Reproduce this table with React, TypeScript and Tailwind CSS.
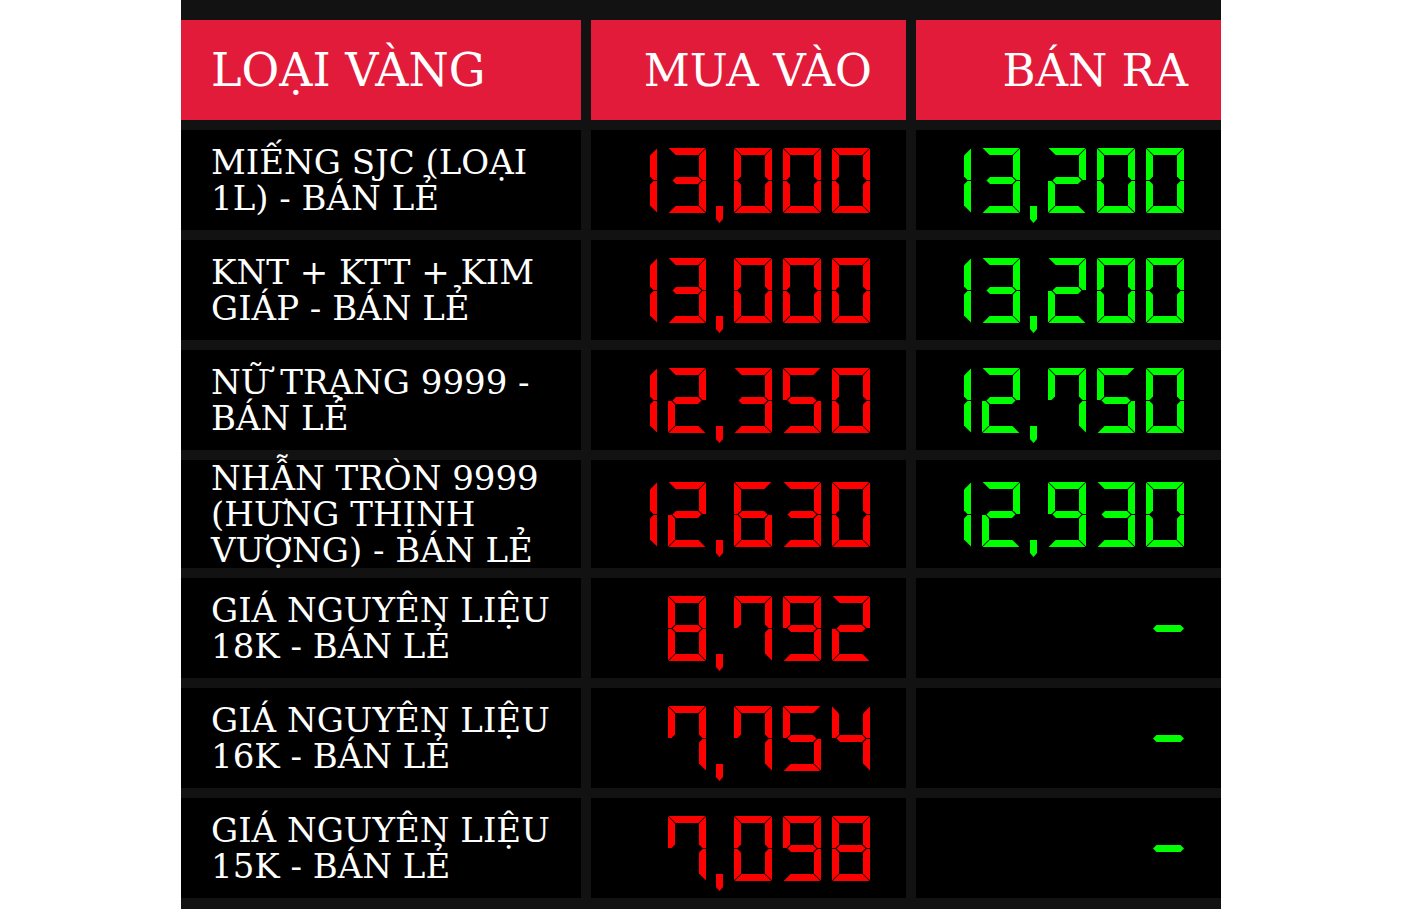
import React from "react";

// 7-segment cell: 38 x 65, segment thickness 7
const SEGMENTS: Record<string, string> = {
  a: "0.6,0 37.4,0 30.4,7 7.6,7",
  b: "38,0.6 38,32 34.5,32 31,28.5 31,7.6",
  c: "38,33 38,64.4 31,57.4 31,36.5 34.5,33",
  d: "7.6,58 30.4,58 37.4,65 0.6,65",
  e: "0,33 3.5,33 7,36.5 7,57.4 0,64.4",
  f: "0,0.6 7,7.6 7,28.5 3.5,32 0,32",
  g: "4.5,32.5 8,29 30,29 33.5,32.5 30,36 8,36",
};

const DIGITS: Record<string, string> = {
  "0": "abcdef",
  "1": "bc",
  "2": "abged",
  "3": "abgcd",
  "4": "fgbc",
  "5": "afgcd",
  "6": "afgedc",
  "7": "afbc",
  "8": "abcdefg",
  "9": "abcdfg",
};

function Digit({ ch, color }: { ch: string; color: string }) {
  const on = DIGITS[ch] ?? "";
  return (
    <svg width={38} height={65} viewBox="0 0 38 65" className="block shrink-0">
      {on.split("").map((s) => (
        <polygon key={s} points={SEGMENTS[s]} fill={color} />
      ))}
    </svg>
  );
}

function Comma({ color }: { color: string }) {
  return (
    <svg
      width={7}
      height={65}
      viewBox="0 0 7 65"
      overflow="visible"
      className="-ml-px block shrink-0 overflow-visible"
    >
      <polygon points="0,58 7,58 7,71 3.5,75 0,71" fill={color} />
    </svg>
  );
}

function Dash({ color }: { color: string }) {
  return (
    <svg width={38} height={65} viewBox="0 0 38 65" className="block shrink-0">
      <polygon points="7,32.5 10.5,29 34.5,29 38,32.5 34.5,36 10.5,36" fill={color} />
    </svg>
  );
}

function SevenSeg({ value, color }: { value: string; color: string }) {
  return (
    <div className="flex items-start gap-[11px]">
      {value.split("").map((ch, i) =>
        ch === "," ? (
          <Comma key={i} color={color} />
        ) : ch === "-" ? (
          <Dash key={i} color={color} />
        ) : (
          <Digit key={i} ch={ch} color={color} />
        )
      )}
    </div>
  );
}

const rows = [
  { name: "MIẾNG SJC (LOẠI 1L) - BÁN LẺ", buy: "13,000", sell: "13,200" },
  { name: "KNT + KTT + KIM GIÁP - BÁN LẺ", buy: "13,000", sell: "13,200" },
  { name: "NỮ TRẠNG 9999 - BÁN LẺ", buy: "12,350", sell: "12,750" },
  { name: "NHẪN TRÒN 9999 (HƯNG THỊNH VƯỢNG) - BÁN LẺ", buy: "12,630", sell: "12,930" },
  { name: "GIÁ NGUYÊN LIỆU 18K - BÁN LẺ", buy: "8,792", sell: "-" },
  { name: "GIÁ NGUYÊN LIỆU 16K - BÁN LẺ", buy: "7,754", sell: "-" },
  { name: "GIÁ NGUYÊN LIỆU 15K - BÁN LẺ", buy: "7,098", sell: "-" },
];

export default function App() {
  return (
    <div className="min-h-[909px] bg-white" style={{ fontFamily: '"DejaVu Serif", "Liberation Serif", serif' }}>
      <div className="ml-[181px] grid w-[1040px] grid-cols-[400px_315px_305px] gap-[10px] bg-[#121212] pt-[20px] pb-[11px]">
        <div className="flex h-[100px] items-center bg-[#e31b3b] pl-[30px] text-[46px] leading-none text-white">
          LOẠI VÀNG
        </div>
        <div className="flex h-[100px] items-center justify-end bg-[#e31b3b] pr-[34px] text-[45px] leading-none text-white">
          MUA VÀO
        </div>
        <div className="flex h-[100px] items-center justify-end bg-[#e31b3b] pr-[33px] text-[45px] leading-none text-white">
          BÁN RA
        </div>

        {rows.map((r) => (
          <React.Fragment key={r.name}>
            <div className="flex min-h-[100px] items-center bg-black pl-[30px] pr-[10px] text-[34px] leading-[36px] text-white">
              {r.name}
            </div>
            <div className="flex min-h-[100px] items-center justify-end bg-black pr-[36px]">
              <SevenSeg value={r.buy} color="#ff0000" />
            </div>
            <div className="flex min-h-[100px] items-center justify-end bg-black pr-[37px]">
              <SevenSeg value={r.sell} color="#00ff00" />
            </div>
          </React.Fragment>
        ))}
      </div>
    </div>
  );
}
